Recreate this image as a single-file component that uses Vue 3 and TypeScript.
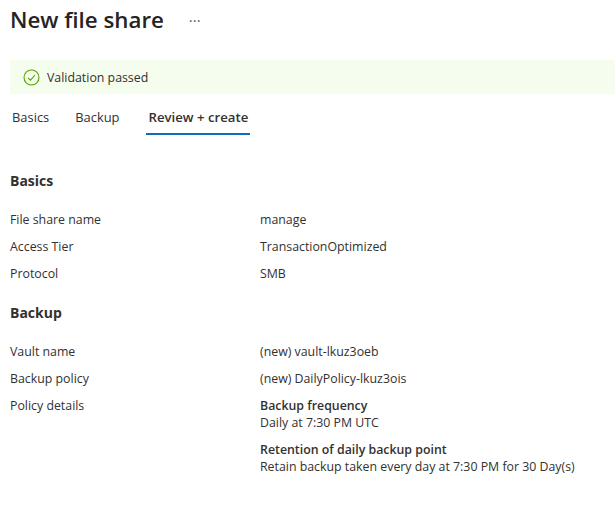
<script setup lang="ts">
interface Row { label: string; value: string }
const basics: Row[] = [
  { label: 'File share name', value: 'manage' },
  { label: 'Access Tier', value: 'TransactionOptimized' },
  { label: 'Protocol', value: 'SMB' },
]
const backup: Row[] = [
  { label: 'Vault name', value: '(new) vault-lkuz3oeb' },
  { label: 'Backup policy', value: '(new) DailyPolicy-lkuz3ois' },
]
</script>

<template>
  <div class="page">
    <header class="head">
      <h1>New file share</h1>
      <span class="more">···</span>
    </header>
    <div class="banner">
      <svg width="17" height="17" viewBox="0 0 17 17" fill="none">
        <circle cx="8.5" cy="8.5" r="7.5" stroke="#57a300" stroke-width="1.1" />
        <path d="M5 8.8 7.5 11.2 12 6" stroke="#57a300" stroke-width="1.1" />
      </svg>
      <span>Validation passed</span>
    </div>
    <nav class="tabs">
      <span class="tab">Basics</span>
      <span class="tab">Backup</span>
      <span class="tab active">Review + create</span>
    </nav>
    <h2 class="first">Basics</h2>
    <div v-for="r in basics" :key="r.label" class="row">
      <span class="label">{{ r.label }}</span><span>{{ r.value }}</span>
    </div>
    <h2 class="second">Backup</h2>
    <div v-for="r in backup" :key="r.label" class="row">
      <span class="label">{{ r.label }}</span><span>{{ r.value }}</span>
    </div>
    <div class="row details">
      <span class="label">Policy details</span>
      <div class="detail">
        <div class="block">
          <strong>Backup frequency</strong>
          <span>Daily at 7:30 PM UTC</span>
        </div>
        <div class="block">
          <strong>Retention of daily backup point</strong>
          <span>Retain backup taken every day at 7:30 PM for 30 Day(s)</span>
        </div>
      </div>
    </div>
  </div>
</template>

<style>
html, body { background: #fff; }
</style>

<style scoped>
.page {
  height: 517px;
  overflow: hidden;
  font-family: "Open Sans", "Noto Sans", sans-serif;
  font-size: 12.35px;
  color: #323130;
  box-sizing: border-box;
  padding-top: 5px;
}
.head {
  display: flex;
  align-items: center;
  height: 29px;
  padding-left: 10px;
}
h1 {
  margin: 0;
  font-size: 22.3px;
  font-weight: 600;
  line-height: 29px;
  color: #252423;
}
.more { margin-left: 25px; font-size: 15px; color: #605e5c; }
.banner {
  margin: 26px 0 0 10px;
  height: 34px;
  display: flex;
  align-items: center;
  gap: 7px;
  padding-left: 13px;
  background: #f5fdee;
}
.tabs {
  display: flex;
  gap: 22px;
  margin-top: 6px;
  padding-left: 10px;
  height: 35px;
}
.tab {
  padding: 8px 2px 0;
  font-size: 12.9px;
  box-sizing: border-box;
}
.tab.active {
  margin-left: 3px;
  font-size: 13.2px;
  font-weight: 600;
  border-bottom: 2px solid #0f6cbd;
}
h2 {
  margin: 0;
  padding-left: 10px;
  font-size: 14px;
  font-weight: 700;
  line-height: 20px;
}
h2.first { margin-top: 36px; margin-bottom: 20px; }
h2.second { margin-top: 21px; margin-bottom: 20px; }
.row {
  display: grid;
  grid-template-columns: 250px 1fr;
  padding-left: 10px;
  line-height: 17px;
  margin-bottom: 10px;
}
.detail { display: flex; flex-direction: column; gap: 10px; }
.block { display: flex; flex-direction: column; }
strong { font-weight: 600; }
</style>
